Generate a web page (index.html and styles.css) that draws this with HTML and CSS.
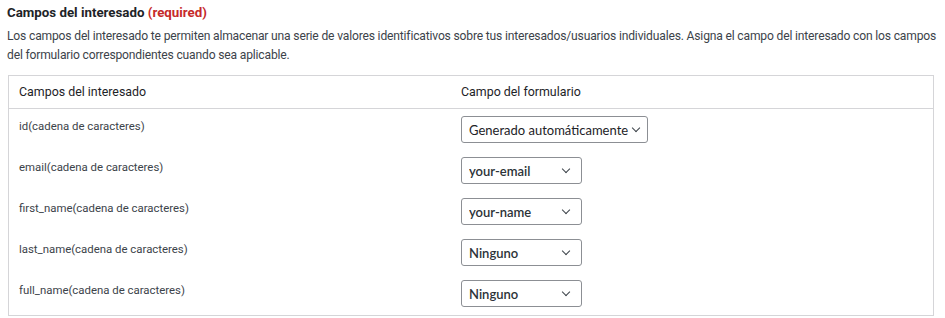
FILE: index.html
```html
<!DOCTYPE html>
<html lang="es">
<head>
    <meta charset="UTF-8">
    <title>Campos del interesado</title>
    <link rel="stylesheet" href="styles.css">
</head>
<body>

<div class="section">
    <h3 class="section-title">Campos del interesado <span class="required">(required)</span></h3>
    <p class="section-desc">Los campos del interesado te permiten almacenar una serie de valores identificativos sobre tus interesados/usuarios individuales. Asigna el campo del interesado con los campos del formulario correspondientes cuando sea aplicable.</p>

    <table class="field-map">
        <thead>
            <tr>
                <th class="col-field">Campos del interesado</th>
                <th>Campo del formulario</th>
            </tr>
        </thead>
        <tbody>
            <tr>
                <td>id(cadena de caracteres)</td>
                <td>
                    <div class="select wide">
                        <select>
                            <option>Generado automáticamente</option>
                        </select>
                    </div>
                </td>
            </tr>
            <tr>
                <td>email(cadena de caracteres)</td>
                <td>
                    <div class="select">
                        <select>
                            <option>your-email</option>
                        </select>
                    </div>
                </td>
            </tr>
            <tr>
                <td>first_name(cadena de caracteres)</td>
                <td>
                    <div class="select">
                        <select>
                            <option>your-name</option>
                        </select>
                    </div>
                </td>
            </tr>
            <tr>
                <td>last_name(cadena de caracteres)</td>
                <td>
                    <div class="select">
                        <select>
                            <option>Ninguno</option>
                        </select>
                    </div>
                </td>
            </tr>
            <tr>
                <td>full_name(cadena de caracteres)</td>
                <td>
                    <div class="select">
                        <select>
                            <option>Ninguno</option>
                        </select>
                    </div>
                </td>
            </tr>
        </tbody>
    </table>
</div>

</body>
</html>
```

FILE: styles.css
```css
body {
    margin: 0;
    background: #ffffff;
    font-family: Roboto, "Liberation Sans", sans-serif;
    color: #3c434a;
}

.section {
    padding: 5px 8px 0 7px;
}

.section-title {
    margin: 0;
    font-size: 13.3px;
    line-height: 16px;
    font-weight: 700;
    color: #1d2327;
}

.required {
    color: #c62a2a;
}

.section-desc {
    margin: 6px 0 10px 0;
    font-size: 12.1px;
    letter-spacing: -0.17px;
    line-height: 19px;
    color: #3c434a;
}

.field-map {
    width: 926px;
    margin-left: 1px;
    border-collapse: collapse;
    border: 1px solid #d5d5d8;
    font-size: 11.4px;
}

.field-map th {
    text-align: left;
    font-weight: 400;
    font-size: 12.4px;
    color: #1d2327;
    padding: 7px 10px 7px 10px;
    line-height: 18px;
    border-bottom: 1px solid #d5d5d8;
}

.field-map .col-field {
    width: 422px;
}

.field-map td {
    vertical-align: top;
    padding: 7px 10px 7px 10px;
    line-height: 20px;
    color: #3c434a;
}

.field-map tbody tr:last-child td {
    padding-bottom: 8px;
}

.select {
    position: relative;
    display: block;
    width: 121px;
    height: 27px;
    border: 1px solid #8c8f94;
    border-radius: 3px;
    box-sizing: border-box;
    background: #ffffff;
}

.select.wide {
    width: 187px;
}

.select select {
    display: block;
    appearance: none;
    -webkit-appearance: none;
    border: none;
    background: transparent;
    width: 100%;
    height: 25px;
    margin: 0;
    padding: 0 14px 0 7px;
    font-family: Lato, "Liberation Sans", sans-serif;
    font-size: 13px;
    font-weight: 600;
    color: #2c3338;
    outline: none;
}

.select.wide select {
    font-weight: 400;
    color: #1d2327;
}

.select::after {
    content: "";
    position: absolute;
    right: 12px;
    top: 8px;
    width: 5px;
    height: 5px;
    border-right: 1.2px solid #3c434a;
    border-bottom: 1.2px solid #3c434a;
    transform: rotate(45deg);
    pointer-events: none;
}

.select.wide::after {
    right: 8px;
}
```
